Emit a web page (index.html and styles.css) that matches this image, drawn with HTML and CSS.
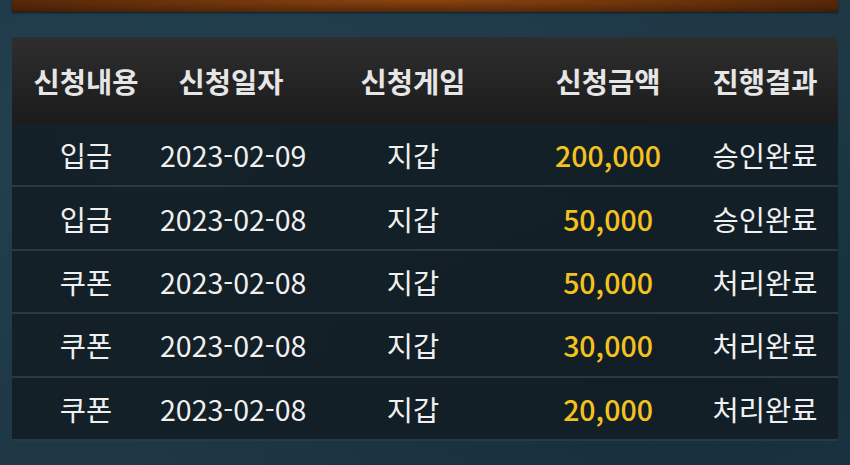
FILE: index.html
```html
<!DOCTYPE html>
<html lang="ko">
<head>
    <meta charset="UTF-8">
    <meta name="viewport" content="width=device-width, initial-scale=1.0">
    <title>신청내역</title>
    <link rel="stylesheet" href="styles.css">
</head>
<body>
    <div class="wrap">
        <div class="top-bar"></div>
        <table class="history">
            <colgroup>
                <col class="c1">
                <col class="c2">
                <col class="c3">
                <col class="c4">
                <col class="c5">
            </colgroup>
            <thead>
                <tr>
                    <th>신청내용</th>
                    <th>신청일자</th>
                    <th>신청게임</th>
                    <th>신청금액</th>
                    <th>진행결과</th>
                </tr>
            </thead>
            <tbody>
                <tr>
                    <td>입금</td>
                    <td>2023-02-09</td>
                    <td>지갑</td>
                    <td class="amount">200,000</td>
                    <td>승인완료</td>
                </tr>
                <tr>
                    <td>입금</td>
                    <td>2023-02-08</td>
                    <td>지갑</td>
                    <td class="amount">50,000</td>
                    <td>승인완료</td>
                </tr>
                <tr>
                    <td>쿠폰</td>
                    <td>2023-02-08</td>
                    <td>지갑</td>
                    <td class="amount">50,000</td>
                    <td>처리완료</td>
                </tr>
                <tr>
                    <td>쿠폰</td>
                    <td>2023-02-08</td>
                    <td>지갑</td>
                    <td class="amount">30,000</td>
                    <td>처리완료</td>
                </tr>
                <tr>
                    <td>쿠폰</td>
                    <td>2023-02-08</td>
                    <td>지갑</td>
                    <td class="amount">20,000</td>
                    <td>처리완료</td>
                </tr>
            </tbody>
        </table>
    </div>
</body>
</html>
```

FILE: styles.css
```css
html, body {
    margin: 0;
    padding: 0;
}
body {
    width: 850px;
    height: 465px;
    overflow: hidden;
    background-color: #1e3846;
    background-image:
        radial-gradient(ellipse at 20% 30%, rgba(40, 75, 92, 0.5), transparent 60%),
        radial-gradient(ellipse at 80% 80%, rgba(14, 36, 48, 0.5), transparent 60%);
    font-family: "Noto Sans CJK KR", "Noto Sans", sans-serif;
    color: #f0f0f0;
}
.wrap {
    padding: 0 12px;
}
.top-bar {
    height: 12px;
    background: radial-gradient(ellipse at 50% 0%, #8c4410 0%, #6a320b 45%, #3e1c06 100%);
    box-shadow: 0 1px 2px rgba(0, 0, 0, 0.5);
}
.history {
    margin-top: 25px;
    width: 826px;
    table-layout: fixed;
    border-collapse: collapse;
    font-size: 28.5px;
    white-space: nowrap;
}
.c1 { width: 148px; }
.c2 { width: 142px; }
.c3 { width: 222px; }
.c4 { width: 168px; }
.c5 { width: 146px; }
.history th {
    height: 87px;
    padding: 0;
    font-weight: bold;
    color: #e6e6e6;
    text-align: center;
    background: linear-gradient(#2e2e2e, #1b1b1b);
}
.history td {
    height: 61.4px;
    padding: 0;
    text-align: center;
    background: rgba(18, 28, 35, 0.88);
    border-bottom: 2px solid #2a3a45;
}
.history td.amount {
    color: #f3c21f;
    font-weight: 500;
}
```
